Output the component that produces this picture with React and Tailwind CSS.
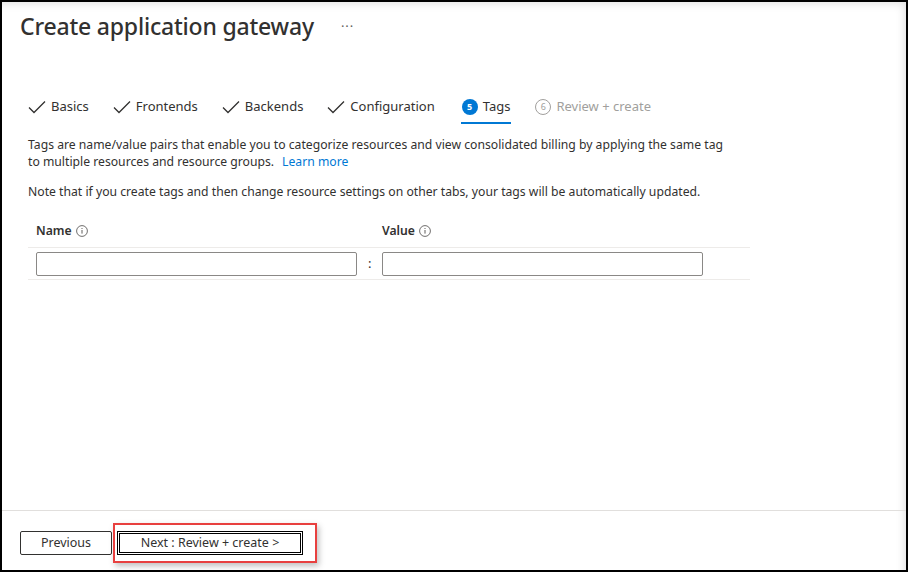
import React from 'react';

const Check = () => (
  <svg width="18" height="14" viewBox="0 0 18 14" className="shrink-0">
    <path d="M1 7.5 L6 12.5 L17 1.5" fill="none" stroke="#323130" strokeWidth="1.3" />
  </svg>
);

const Info = () => (
  <svg width="12" height="12" viewBox="0 0 12 12" className="shrink-0">
    <circle cx="6" cy="6" r="5.4" fill="none" stroke="#605e5c" strokeWidth="0.9" />
    <rect x="5.5" y="5" width="1" height="3.6" fill="#605e5c" />
    <rect x="5.5" y="3" width="1" height="1" fill="#605e5c" />
  </svg>
);

const doneTabs = ['Basics', 'Frontends', 'Backends', 'Configuration'];

export default function App() {
  return (
    <div
      className="w-[908px] h-[572px] border-2 border-black bg-white flex flex-col text-[#323130] shadow-[inset_-6px_6px_8px_-4px_rgba(0,0,0,0.12)]"
      style={{ fontFamily: '"Noto Sans", "Open Sans", sans-serif' }}
    >
      <div className="flex-1 pl-[18px] pt-[8px]">
        {/* Title */}
        <div className="flex items-center h-[32px]">
          <h1 className="text-[23px] font-medium tracking-[-0.2px]">Create application gateway</h1>
          <span className="ml-[27px] text-[13px] text-[#605e5c] tracking-[1px] mt-[1px]">···</span>
        </div>

        {/* Tabs */}
        <div className="flex items-stretch ml-[8px] mt-[50px] h-[32px] text-[13px]">
          {doneTabs.map((t) => (
            <div key={t} className="flex items-center gap-[5px] mr-[24px] pb-[2px]">
              <Check />
              <span>{t}</span>
            </div>
          ))}
          <div className="flex items-center gap-[5px] mr-[24px] border-b-2 border-[#0078d4] px-[1px] ml-[2px]">
            <span className="w-[16px] h-[16px] rounded-full bg-[#0078d4] text-white text-[9px] font-bold flex items-center justify-center">5</span>
            <span>Tags</span>
          </div>
          <div className="flex items-center gap-[5px] pb-[2px] text-[#a19f9d]">
            <span className="w-[16px] h-[16px] rounded-full border border-[#a19f9d] text-[9px] flex items-center justify-center">6</span>
            <span>Review + create</span>
          </div>
        </div>

        {/* Description */}
        <div className="ml-[8px] mt-[12px] text-[12.2px] leading-[17px] w-[740px]">
          <p>
            Tags are name/value pairs that enable you to categorize resources and view consolidated billing by applying the same tag
            <br />
            to multiple resources and resource groups.
            <a href="#" className="text-[#0078d4] ml-[8px]">Learn more</a>
          </p>
          <p className="mt-[13px]">
            Note that if you create tags and then change resource settings on other tabs, your tags will be automatically updated.
          </p>
        </div>

        {/* Tags grid */}
        <div className="ml-[8px] mt-[20px] w-[722px] text-[12.2px]">
          <div className="flex items-center h-[28px] pb-[5px] border-b border-[#edebe9] font-semibold">
            <div className="w-[354px] pl-[8px] flex items-center gap-[4px]">
              Name <Info />
            </div>
            <div className="flex items-center gap-[4px]">
              Value <Info />
            </div>
          </div>
          <div className="flex items-center h-[32px] border-b border-[#edebe9]">
            <div className="w-[354px] pl-[8px] flex items-center">
              <div className="w-[321px] h-[24px] border border-[#8a8886] rounded-[2px]" />
              <span className="ml-[11px] text-[13px]">:</span>
            </div>
            <div className="w-[321px] h-[24px] border border-[#8a8886] rounded-[2px]" />
          </div>
        </div>
      </div>

      {/* Footer */}
      <div className="h-[60px] border-t border-[#e1dfdd] flex items-center pl-[18px] pt-[5px] text-[12.5px]">
        <button className="w-[92px] h-[24px] border border-[#323130] rounded-[2px] bg-white">Previous</button>
        <div className="ml-[1px] w-[204px] h-[40px] border-2 border-[#e8403f] flex items-center pl-[2px] shadow-[2px_3px_6px_rgba(0,0,0,0.25)]">
          <button className="w-[186px] h-[24px] border border-black bg-white shadow-[inset_0_0_0_1px_white,inset_0_0_0_2px_black]">
            Next : Review + create &gt;
          </button>
        </div>
      </div>
    </div>
  );
}
